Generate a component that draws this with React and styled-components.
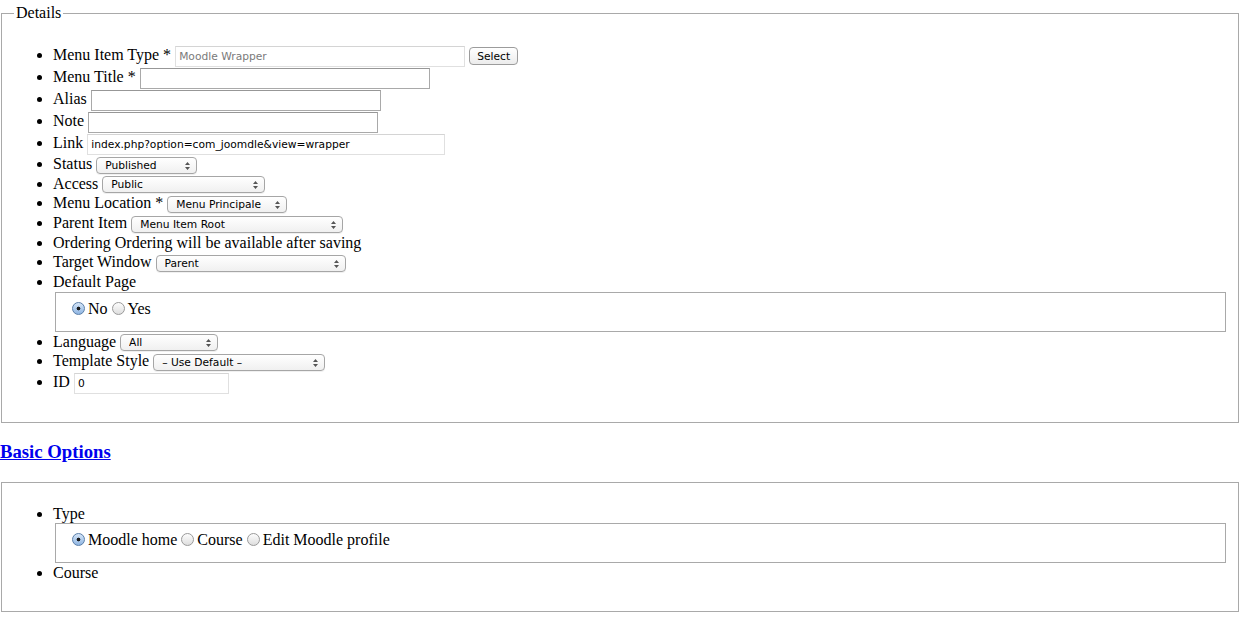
import React from "react";
import styled, { createGlobalStyle } from "styled-components";

const GlobalStyle = createGlobalStyle`
  body {
    margin: 0;
    background: #fff;
    color: #000;
    font-family: "Liberation Serif", "Times New Roman", serif;
    font-size: 16px;
  }
`;

const controlFont = `10.7px "DejaVu Sans", "Liberation Sans", sans-serif`;

const Page = styled.form`
  padding-top: 4px;
`;

const Fieldset = styled.fieldset`
  margin: 0 4px 0 1px;
  padding: ${(p) => p.$pt || 6}px 12px ${(p) => p.$pb || 12}px;
  border: 1px solid #a9a9a9;
  min-width: 0;
`;

const Legend = styled.legend`
  padding: 0 2px;
`;

const List = styled.ul`
  margin: 16px 0;
  padding-left: 39px;
  list-style: disc;
`;

const Item = styled.li`
  line-height: ${(p) => p.$h || 19.67}px;
  ${(p) => (p.$h ? `height: ${p.$h}px;` : "")}
`;

const TextInput = styled.input`
  box-sizing: border-box;
  width: ${(p) => p.$w}px;
  height: 21px;
  margin: 0;
  padding: 0 3px;
  border: 1px solid ${(p) => (p.readOnly ? "#e0e0e0" : "#a9a9a9")};
  border-top-color: ${(p) => (p.readOnly ? "#d4d4d4" : "#979797")};
  font: ${controlFont};
  color: ${(p) => (p.$muted ? "#7a7a7a" : "#000")};
  vertical-align: middle;
  background: #fff;
  outline: none;
`;

const Button = styled.button`
  box-sizing: border-box;
  height: 18px;
  margin-left: 4px;
  padding: 0 7px;
  border: 1px solid #9c9c9c;
  border-radius: 4px;
  background: linear-gradient(#ffffff, #ececec);
  font: ${controlFont};
  color: #000;
  vertical-align: middle;
`;

const SelectWrap = styled.span`
  position: relative;
  display: inline-block;
  vertical-align: middle;
  line-height: 0;
`;

const Select = styled.select`
  appearance: none;
  -webkit-appearance: none;
  box-sizing: border-box;
  width: ${(p) => p.$w}px;
  height: 17px;
  margin: 0;
  padding: 0 16px 0 8px;
  border: 1px solid #a6a6a6;
  border-radius: 4px;
  background: linear-gradient(#ffffff, #f0f0f0);
  box-shadow: 0 1px 0 rgba(0, 0, 0, 0.06);
  font: ${controlFont};
  color: #000;
  outline: none;
`;

const Arrows = styled.svg`
  position: absolute;
  right: 7px;
  top: 5px;
  pointer-events: none;
`;

const Dropdown = ({ w, value }) => (
  <SelectWrap>
    <Select $w={w} defaultValue={value}>
      <option>{value}</option>
    </Select>
    <Arrows width="5" height="8" viewBox="0 0 5 8">
      <path d="M2.5 0 L5 3 L0 3 Z M2.5 8 L5 5 L0 5 Z" fill="#555" />
    </Arrows>
  </SelectWrap>
);

const Group = styled.fieldset`
  margin: 0 0 0 2px;
  padding: 6px 12px 13px 16px;
  border: 1px solid #a9a9a9;
  line-height: 19px;
`;

const Radio = styled.input.attrs({ type: "radio" })`
  appearance: none;
  -webkit-appearance: none;
  box-sizing: border-box;
  width: 13px;
  height: 13px;
  margin: 0 3px 0 0;
  border: 1px solid #9a9a9a;
  border-radius: 50%;
  background: linear-gradient(#fdfdfd, #dedede);
  vertical-align: -1px;
  &:checked {
    border-color: #5a7ea8;
    background: radial-gradient(circle, #1a1a1a 0 1.6px, transparent 2.2px),
      linear-gradient(#d6e6f8, #8fb5e2);
  }
`;

const Heading = styled.h3`
  margin: 18px 0 18.72px;
  font-size: 18.72px;
  font-weight: bold;
  line-height: 22px;
`;

const HeadingLink = styled.a`
  color: #0000ee;
  text-decoration: underline;
`;

const RadioGroup = ({ name, options, checked }) => (
  <Group>
    {options.map((o) => (
      <label key={o}>
        <Radio name={name} defaultChecked={o === checked} />
        {o}{" "}
      </label>
    ))}
  </Group>
);

export default function App() {
  return (
    <>
      <GlobalStyle />
      <Page onSubmit={(e) => e.preventDefault()}>
        <Fieldset $pb={13}>
          <Legend>Details</Legend>
          <List>
            <Item $h={22}>
              Menu Item Type * <TextInput $w={290} readOnly $muted defaultValue="Moodle Wrapper" />
              <Button type="button">Select</Button>
            </Item>
            <Item $h={22}>
              Menu Title * <TextInput $w={290} />
            </Item>
            <Item $h={22}>
              Alias <TextInput $w={290} />
            </Item>
            <Item $h={22}>
              Note <TextInput $w={290} />
            </Item>
            <Item $h={22}>
              Link <TextInput $w={358} readOnly defaultValue="index.php?option=com_joomdle&view=wrapper" />
            </Item>
            <Item $h={19.67}>
              Status <Dropdown w={101} value="Published" />
            </Item>
            <Item $h={19.67}>
              Access <Dropdown w={163} value="Public" />
            </Item>
            <Item $h={19.67}>
              Menu Location * <Dropdown w={120} value="Menu Principale" />
            </Item>
            <Item $h={19.67}>
              Parent Item <Dropdown w={212} value="Menu Item Root" />
            </Item>
            <Item $h={19.67}>Ordering Ordering will be available after saving</Item>
            <Item $h={19.67}>
              Target Window <Dropdown w={190} value="Parent" />
            </Item>
            <Item>
              Default Page
              <RadioGroup name="home" options={["No", "Yes"]} checked="No" />
            </Item>
            <Item $h={19.67}>
              Language <Dropdown w={98} value="All" />
            </Item>
            <Item $h={19.67}>
              Template Style <Dropdown w={172} value="– Use Default –" />
            </Item>
            <Item $h={22}>
              ID <TextInput $w={155} readOnly defaultValue="0" />
            </Item>
          </List>
        </Fieldset>

        <Heading>
          <HeadingLink href="#basic">Basic Options</HeadingLink>
        </Heading>

        <Fieldset $pt={5} $pb={12}>
          <List>
            <Item>
              Type
              <RadioGroup
                name="type"
                options={["Moodle home", "Course", "Edit Moodle profile"]}
                checked="Moodle home"
              />
            </Item>
            <Item>Course</Item>
          </List>
        </Fieldset>
      </Page>
    </>
  );
}
